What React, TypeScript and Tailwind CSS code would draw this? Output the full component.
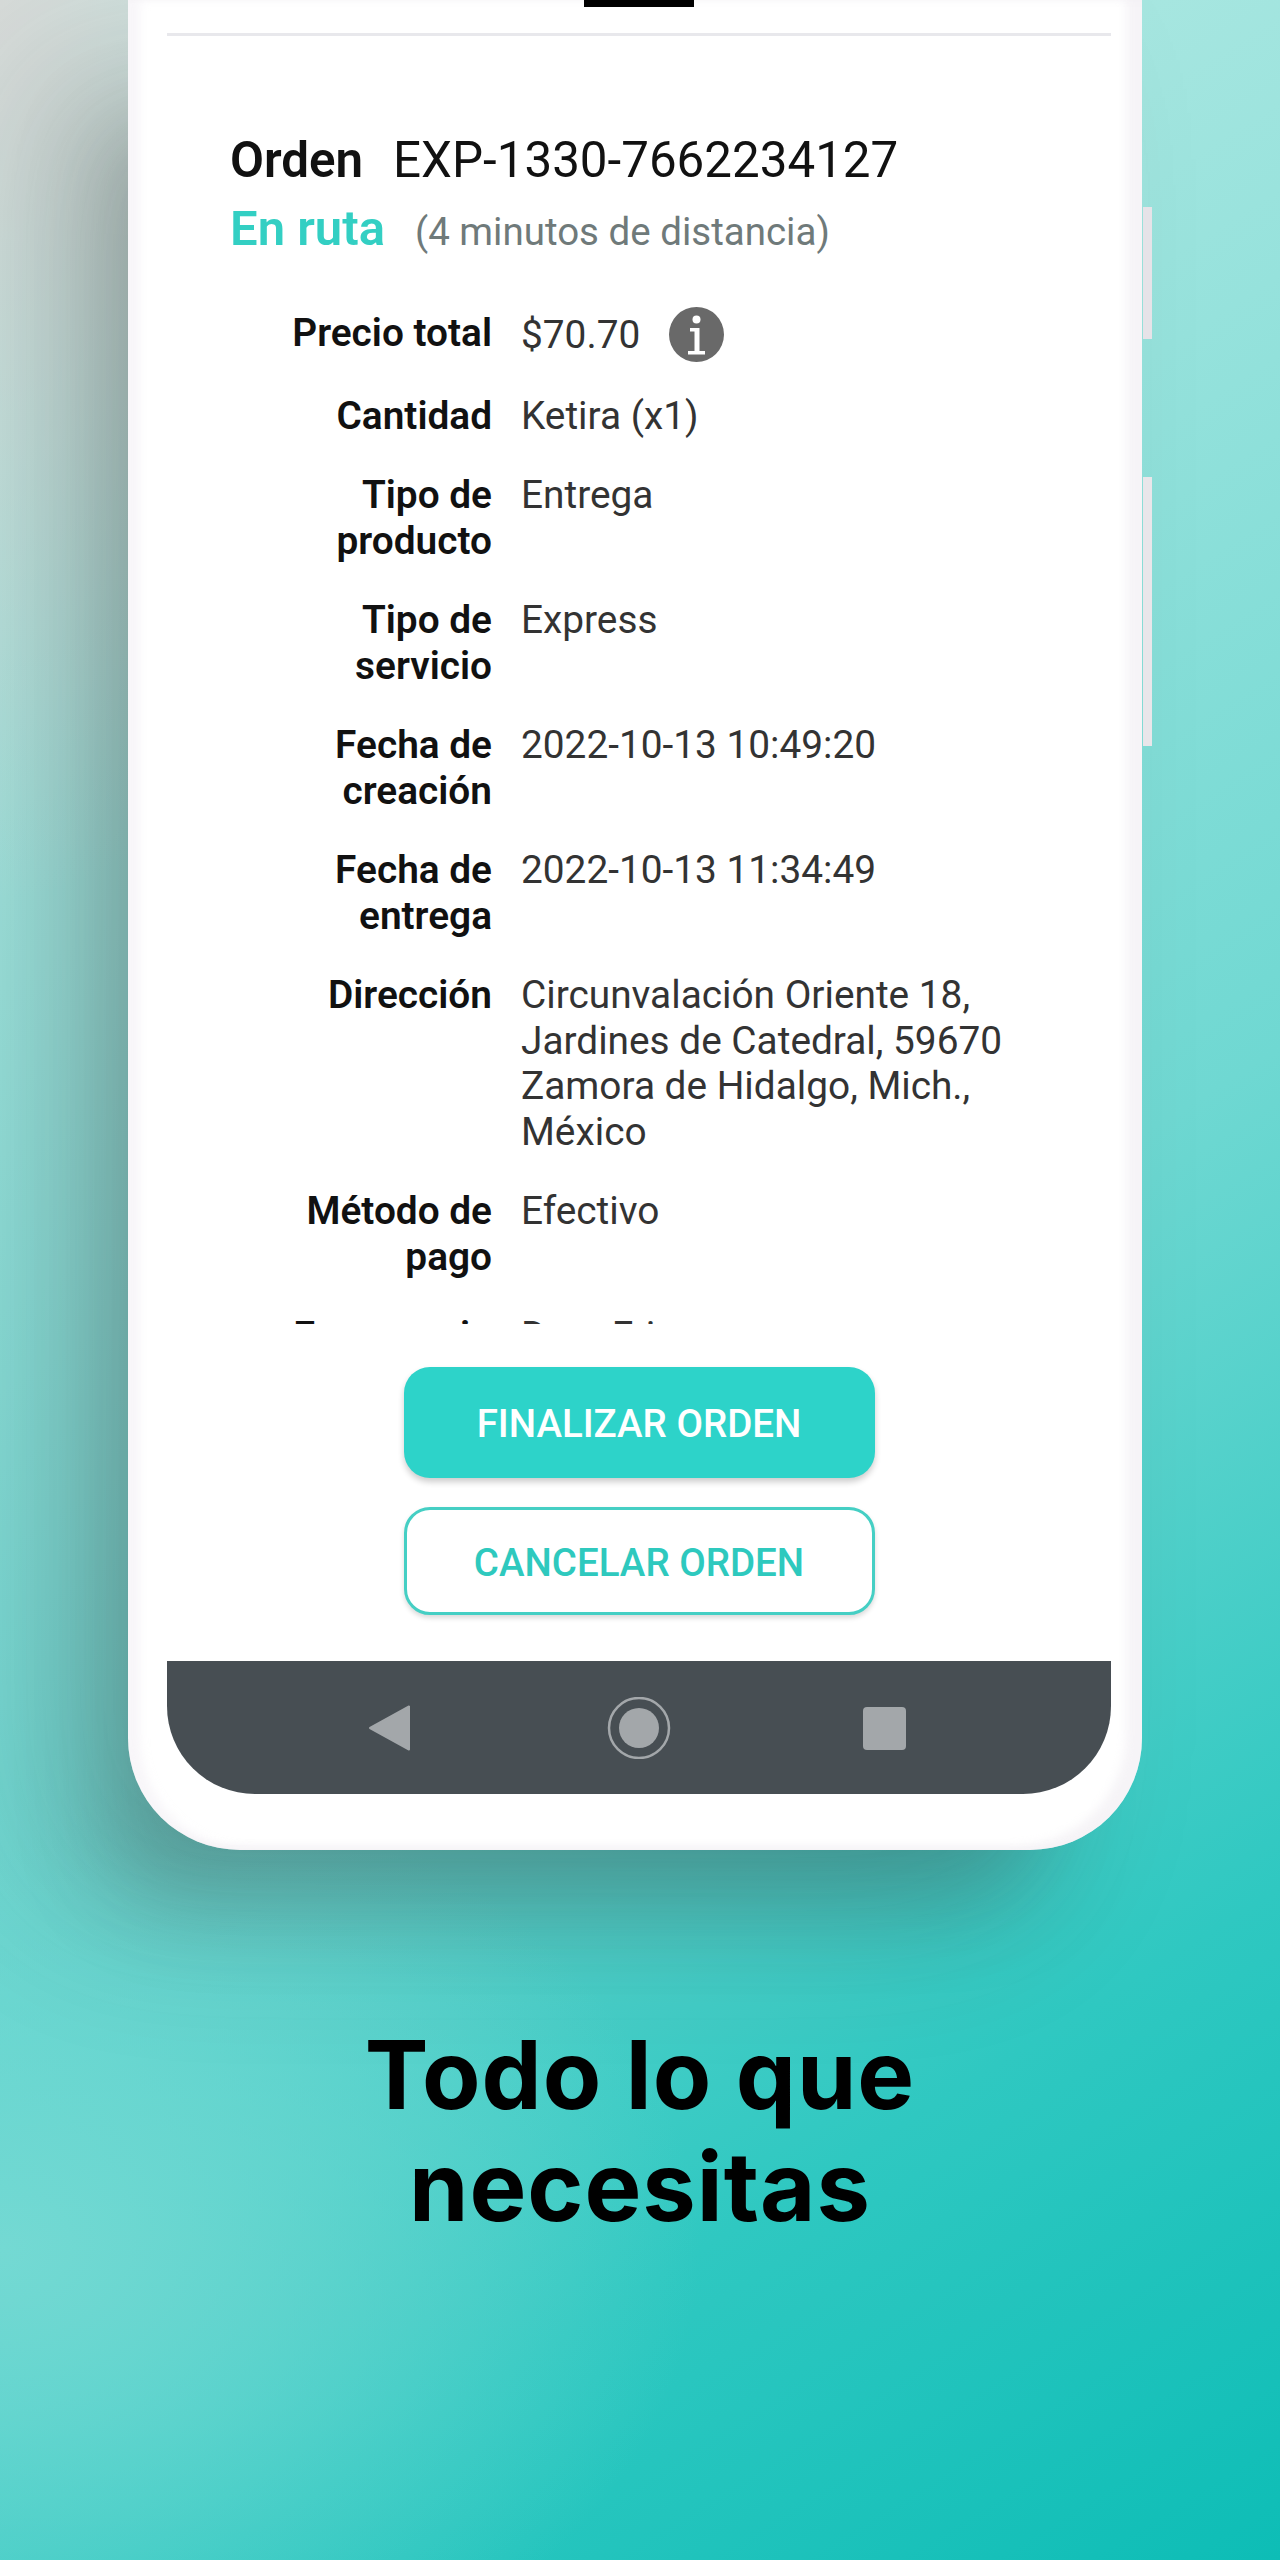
const rows: { label: string[]; value: string[]; info?: boolean }[] = [
  { label: ['Precio total'], value: ['$70.70'], info: true },
  { label: ['Cantidad'], value: ['Ketira (x1)'] },
  { label: ['Tipo de', 'producto'], value: ['Entrega'] },
  { label: ['Tipo de', 'servicio'], value: ['Express'] },
  { label: ['Fecha de', 'creación'], value: ['2022-10-13 10:49:20'] },
  { label: ['Fecha de', 'entrega'], value: ['2022-10-13 11:34:49'] },
  {
    label: ['Dirección'],
    value: ['Circunvalación Oriente 18,', 'Jardines de Catedral, 59670', 'Zamora de Hidalgo, Mich.,', 'México'],
  },
  { label: ['Método de', 'pago'], value: ['Efectivo'] },
  { label: ['Empresario'], value: ['Dora Frias'] },
];

function InfoIcon() {
  return (
    <svg viewBox="0 0 55 55" className="w-[55px] h-[55px] ml-[29px] -my-[3px] shrink-0">
      <circle cx="27.5" cy="27.5" r="27.5" fill="#696969" />
      <circle cx="27.5" cy="12.5" r="4" fill="#fff" />
      <path d="M21 21h9.5v23H36v3.5H19V44h6.5V24.5H21z" fill="#fff" />
    </svg>
  );
}

export default function App() {
  return (
    <div className="relative w-[1280px] h-[2560px] overflow-hidden font-['Roboto',sans-serif] bg-[radial-gradient(ellipse_420px_900px_at_0px_0px,#d8dcda,transparent),radial-gradient(ellipse_700px_500px_at_0px_2250px,#74d9d3,transparent),linear-gradient(148deg,#c8eee8_0%,#96e2dc_32%,#6fd8d2_55%,#2fc8c1_80%,#0dbdb6_100%)]">
      {/* phone */}
      <div className="relative ml-[128px] w-[1014px] h-[1850px] bg-white rounded-b-[112px] shadow-[-100px_60px_160px_rgba(60,60,60,0.2),-60px_90px_90px_-40px_rgba(60,60,60,0.26),inset_-16px_-4px_10px_rgba(235,230,238,0.45),inset_12px_0_10px_rgba(235,230,238,0.35)]">
        <div className="absolute left-[1015px] top-[207px] w-[9px] h-[132px] bg-[#e6e3e8]" />
        <div className="absolute left-[1015px] top-[477px] w-[9px] h-[269px] bg-[#e9e6ea]" />

        <div className="ml-[39px] mr-[31px] h-[36px] border-b-[3px] border-[#e8e8ec] flex justify-center">
          <div className="w-[110px] h-[7px] bg-black" />
        </div>

        <div className="h-[1288px] overflow-hidden pl-[102px] pt-[96px]">
          <div className="flex items-baseline text-[49.3px] leading-[56px] text-[#111]">
            <span className="font-semibold">Orden</span>
            <span className="ml-[30px]">EXP-1330-7662234127</span>
          </div>
          <div className="flex items-baseline mt-[14px]">
            <span className="text-[49px] leading-[54px] font-semibold text-[#33cfc3]">En ruta</span>
            <span className="ml-[30px] text-[38.5px] text-[#6f7a7a]">(4 minutos de distancia)</span>
          </div>

          <div className="mt-[49px] flex flex-col gap-[34px] text-[38.8px] leading-[45.5px]">
            {rows.map((r) => (
              <div key={r.label[0] + r.value[0]} className="flex">
                <div className="w-[262px] shrink-0 text-right font-semibold text-[#111]">
                  {r.label.map((l) => (
                    <div key={l}>{l}</div>
                  ))}
                </div>
                <div className="ml-[29px] text-[#333]">
                  {r.value.map((v) => (
                    <div key={v} className="flex items-center">
                      {v}
                      {r.info && <InfoIcon />}
                    </div>
                  ))}
                </div>
              </div>
            ))}
          </div>
        </div>

        <div className="mt-[43px] flex flex-col items-center gap-[29px] pl-[8px] text-[38.5px] font-medium">
          <div className="w-[471px] h-[111px] pt-[3px] rounded-[26px] bg-[#2dd3c9] text-white flex items-center justify-center shadow-[0_4px_6px_rgba(0,0,0,0.2)]">
            FINALIZAR ORDEN
          </div>
          <div className="w-[471px] h-[108px] pt-[3px] rounded-[26px] bg-white border-[3px] border-[#45cfc4] text-[#2ec9be] flex items-center justify-center shadow-[0_3px_5px_rgba(0,0,0,0.15)]">
            CANCELAR ORDEN
          </div>
        </div>

        <div className="mt-[46px] ml-[39px] mr-[31px] h-[133px] bg-[#474e53] rounded-b-[88px] flex items-center justify-center">
          <svg viewBox="0 0 540 62" className="w-[540px] h-[62px]">
            <path d="M40 9.5v43L1 31z" fill="#a3a7aa" stroke="#a3a7aa" strokeWidth="2" strokeLinejoin="round" />
            <circle cx="270" cy="31" r="30" fill="none" stroke="#a3a7aa" strokeWidth="2.5" />
            <circle cx="270" cy="31" r="20" fill="#a3a7aa" />
            <rect x="494" y="10" width="43" height="43" rx="4" fill="#a3a7aa" />
          </svg>
        </div>
      </div>

      <h1 className="mt-[168px] text-center text-[95.5px] leading-[112px] tracking-[0.01em] font-bold text-black font-['Inter',sans-serif]">
        Todo lo que
        <br />
        necesitas
      </h1>
    </div>
  );
}
